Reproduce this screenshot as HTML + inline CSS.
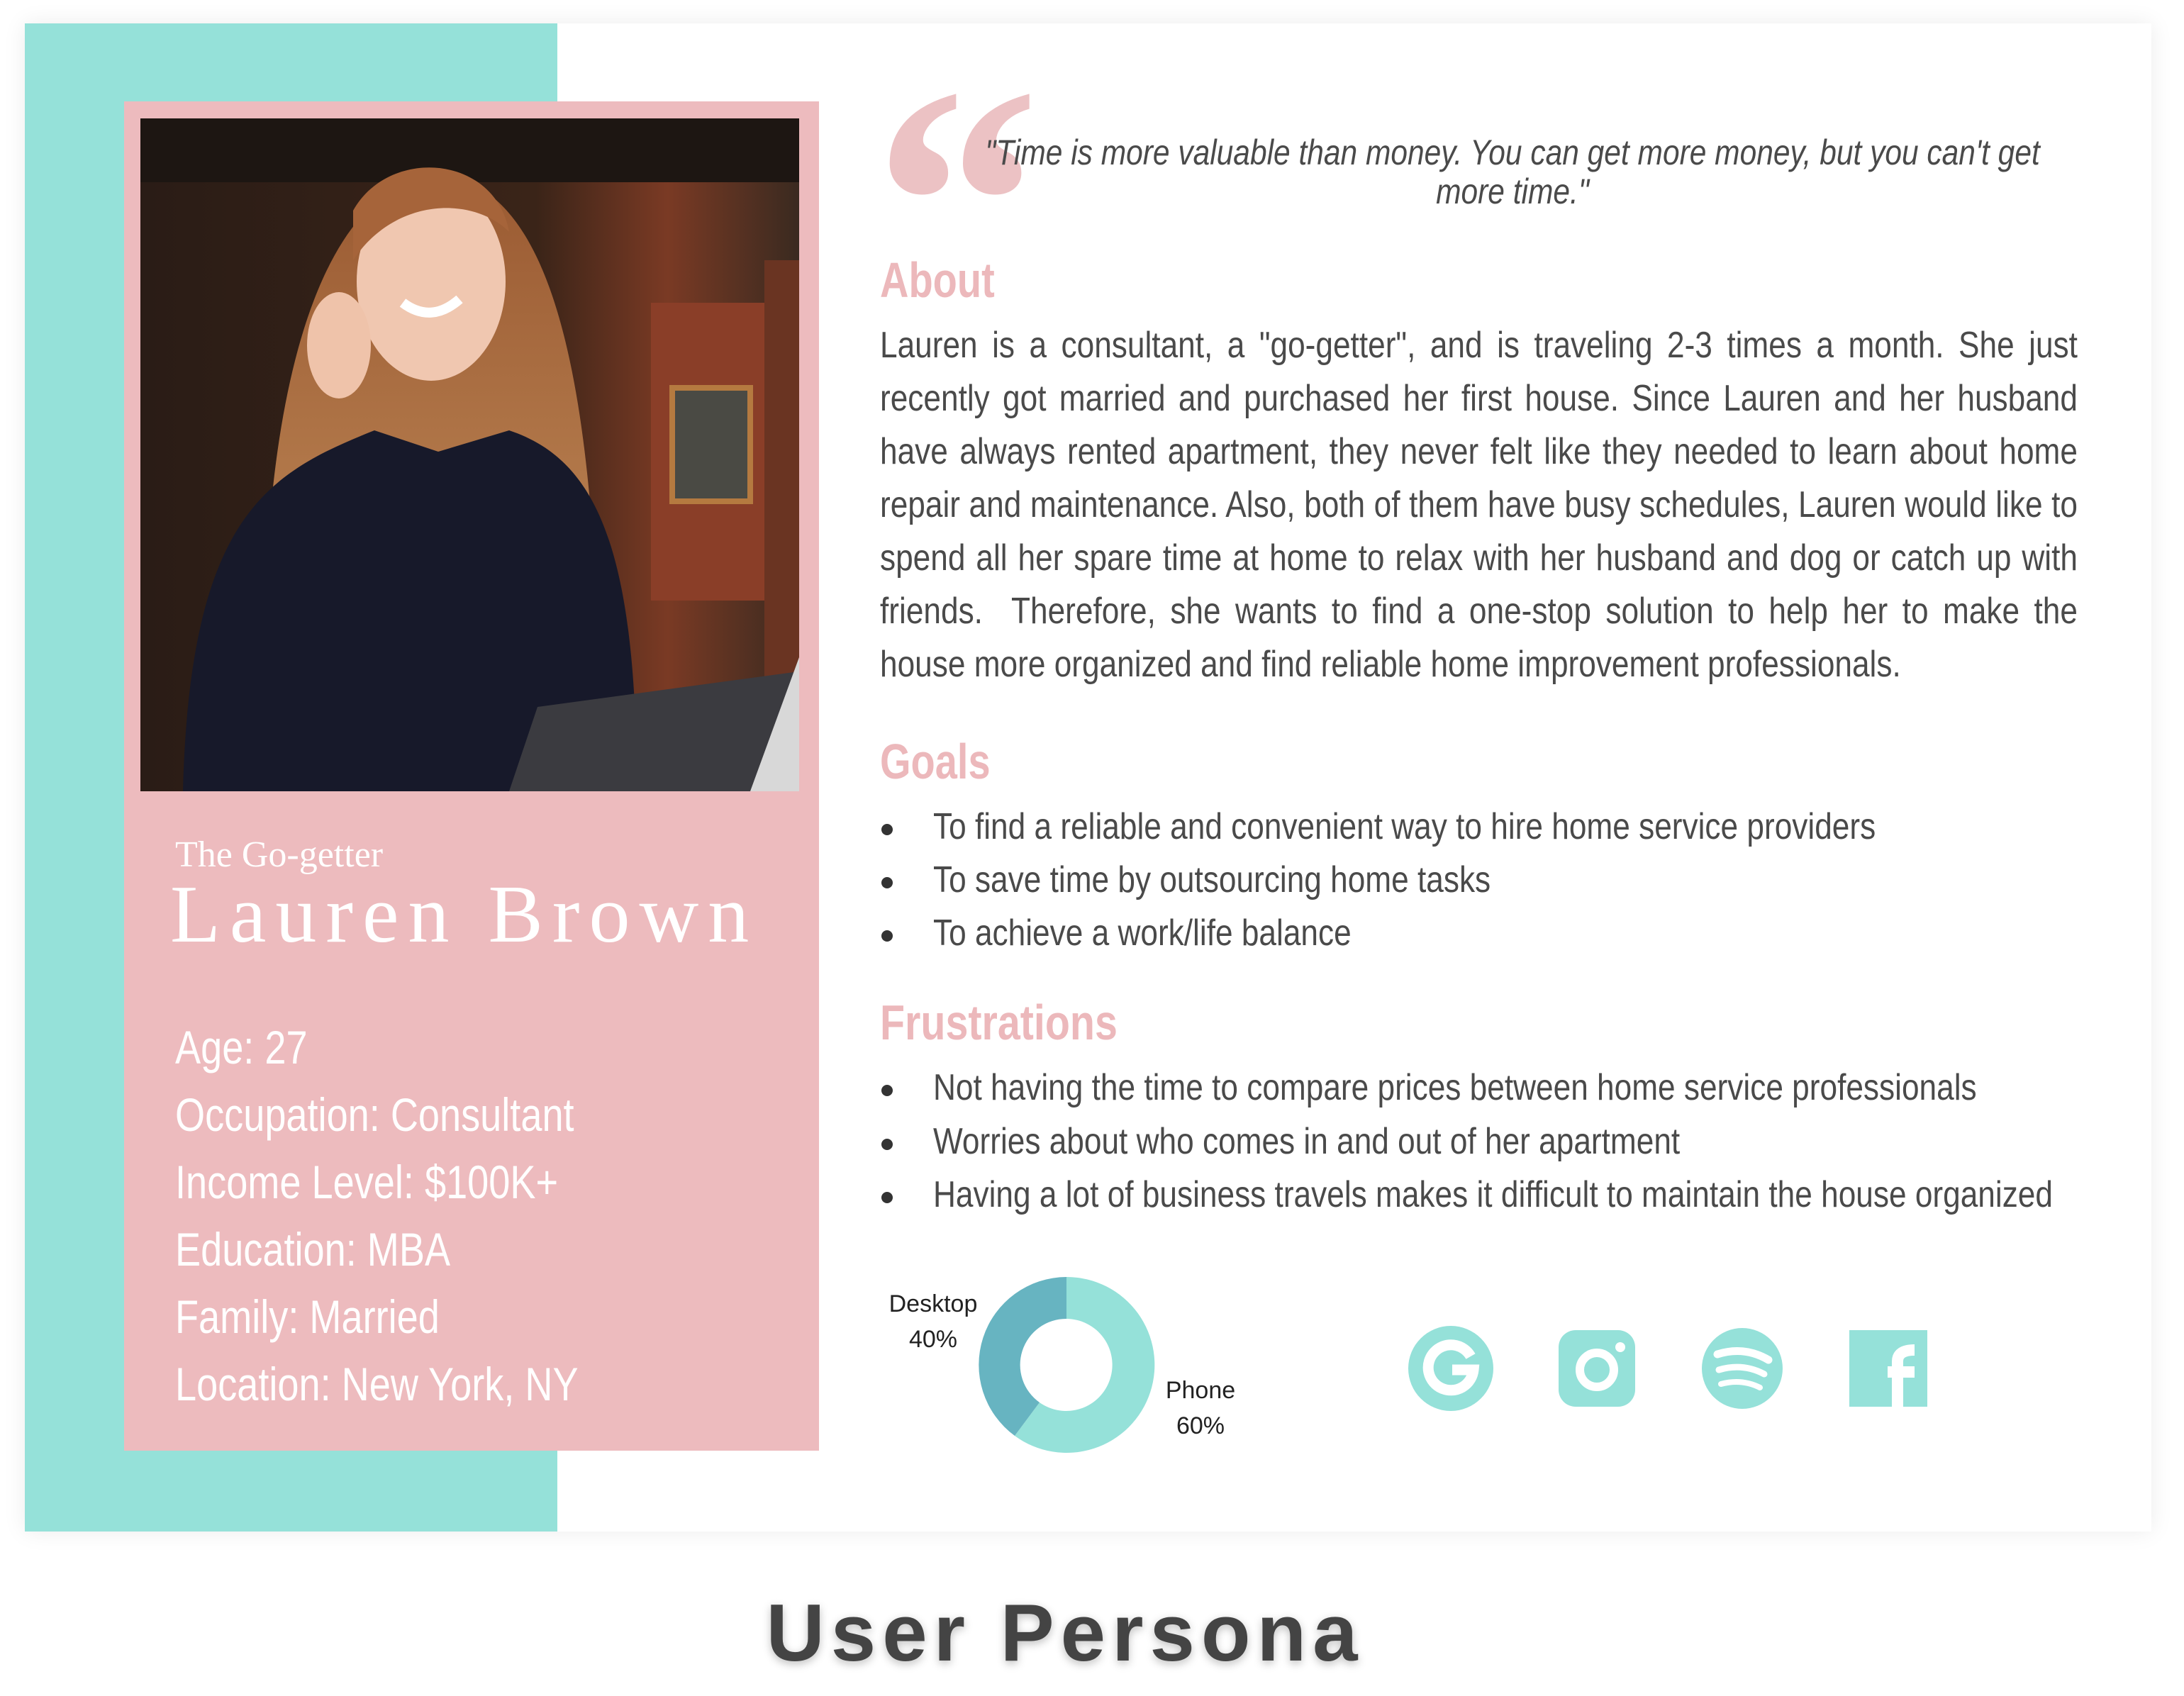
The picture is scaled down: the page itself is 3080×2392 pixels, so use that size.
<!DOCTYPE html>
<html><head><meta charset="utf-8">
<style>
*{margin:0;padding:0;box-sizing:border-box}
html,body{width:3080px;height:2392px;background:#fff;overflow:hidden;font-family:"Liberation Sans",sans-serif}
.abs{position:absolute}
.card{left:35px;top:33px;width:2999px;height:2127px;background:#fff;box-shadow:0 0 30px rgba(0,0,0,0.08)}
.teal{left:35px;top:33px;width:751px;height:2127px;background:#95e1d9}
.pink{left:175px;top:143px;width:980px;height:1903px;background:#edbbbe}
.photo{left:198px;top:167px;width:929px;height:949px;overflow:hidden}
.c{transform-origin:0 0;transform:scaleX(0.85);white-space:nowrap}
.body{color:#4a4a4a;font-size:52px}
.line{width:1987px;text-align:justify;text-align-last:justify;height:75px;line-height:75px}
.h{color:#ecb8bb;font-weight:bold;font-size:70px;transform:scaleX(0.8)}
.det{color:#fff;font-size:66px;line-height:95px;transform:scaleX(0.82)}
.bul{position:absolute;width:16px;height:16px;border-radius:50%;background:#333}
</style></head><body>
<div class="abs card"></div>
<div class="abs teal"></div>
<div class="abs pink"></div>
<div class="abs photo">
<svg width="929" height="949" viewBox="0 0 929 949">
<defs>
<linearGradient id="bg" x1="0" y1="0" x2="1" y2="0"><stop offset="0" stop-color="#2a1c16"/><stop offset="0.6" stop-color="#3a2418"/><stop offset="0.8" stop-color="#7a3a24"/><stop offset="1" stop-color="#3a2a20"/></linearGradient>
<linearGradient id="hair" x1="0" y1="0" x2="0" y2="1"><stop offset="0" stop-color="#9a5a32"/><stop offset="1" stop-color="#c08a58"/></linearGradient>
</defs>
<rect width="929" height="949" fill="url(#bg)"/>
<rect x="0" y="0" width="929" height="90" fill="#1d1612"/>
<rect x="720" y="260" width="170" height="420" fill="#8a3e28"/>
<rect x="750" y="380" width="110" height="160" fill="#4a4a44" stroke="#b57a40" stroke-width="8"/>
<rect x="880" y="200" width="49" height="600" fill="#6a3422"/>
<path d="M180 600 C200 300 280 90 420 80 C560 90 620 300 640 620 L560 780 L200 780 Z" fill="url(#hair)"/>
<ellipse cx="410" cy="230" rx="105" ry="140" fill="#f0c7b0"/>
<path d="M300 130 C350 40 500 50 520 160 C470 110 360 110 300 200 Z" fill="#a6643a"/>
<path d="M370 260 Q410 290 450 255" stroke="#fff" stroke-width="14" fill="none"/>
<path d="M60 949 C70 560 180 500 330 440 L420 470 L520 440 C640 480 700 600 700 949 Z" fill="#17192a"/>
<path d="M560 830 L929 780 L929 949 L520 949 Z" fill="#3b3b40"/>
<path d="M860 949 L929 760 L929 949 Z" fill="#d8d8d8"/>
<ellipse cx="280" cy="320" rx="45" ry="75" fill="#efc3aa"/>
</svg>
</div>

<div class="abs" style="left:247px;top:1176px;color:#fff;font-family:'Liberation Serif',serif;font-size:52px">The Go-getter</div>
<div class="abs" style="left:240px;top:1225px;color:#fff;font-family:'Liberation Serif',serif;font-size:116px;letter-spacing:13px;line-height:130px">Lauren Brown</div>

<div class="abs c det" style="left:247px;top:1430px">
<div>Age: 27</div>
<div>Occupation: Consultant</div>
<div>Income Level: $100K+</div>
<div>Education: MBA</div>
<div>Family: Married</div>
<div>Location: New York, NY</div>
</div>

<div class="abs" style="left:1232px;top:52px;color:#ecc2c4;font-family:'Liberation Serif',serif;font-size:470px;line-height:470px;font-weight:bold">&ldquo;</div>
<div class="abs c" style="left:1300px;top:188px;color:#4a4a4a;font-style:italic;font-size:50px;line-height:55px;width:1960px;text-align:center">"Time is more valuable than money. You can get more money, but you can't get<br>more time."</div>

<div class="abs c h" style="left:1241px;top:355px">About</div>
<div class="abs c body" style="left:1241px;top:450px">
<div class="line">Lauren is a consultant, a "go-getter", and is traveling 2-3 times a month. She just</div>
<div class="line">recently got married and purchased her first house. Since Lauren and her husband</div>
<div class="line">have always rented apartment, they never felt like they needed to learn about home</div>
<div class="line">repair and maintenance. Also, both of them have busy schedules, Lauren would like to</div>
<div class="line">spend all her spare time at home to relax with her husband and dog or catch up with</div>
<div class="line">friends.&nbsp; Therefore, she wants to find a one-stop solution to help her to make the</div>
<div class="line" style="text-align-last:left">house more organized and find reliable home improvement professionals.</div>
</div>

<div class="abs c h" style="left:1241px;top:1034px">Goals</div>
<div class="bul" style="left:1243px;top:1162px"></div>
<div class="bul" style="left:1243px;top:1237px"></div>
<div class="bul" style="left:1243px;top:1312px"></div>
<div class="abs c body" style="left:1316px;top:1129px;line-height:75px">
<div>To find a reliable and convenient way to hire home service providers</div>
<div>To save time by outsourcing home tasks</div>
<div>To achieve a work/life balance</div>
</div>

<div class="abs c h" style="left:1241px;top:1402px;transform:scaleX(0.82)">Frustrations</div>
<div class="bul" style="left:1243px;top:1530px"></div>
<div class="bul" style="left:1243px;top:1606px"></div>
<div class="bul" style="left:1243px;top:1681px"></div>
<div class="abs c body" style="left:1316px;top:1497px;line-height:75.5px">
<div>Not having the time to compare prices between home service professionals</div>
<div>Worries about who comes in and out of her apartment</div>
<div>Having a lot of business travels makes it difficult to maintain the house organized</div>
</div>

<svg class="abs" style="left:1250px;top:1780px" width="520" height="300" viewBox="1250 1780 520 300">
<path d="M1504 1801 A124 124 0 1 1 1431 2025 L1466 1978 A65 65 0 1 0 1504 1860 Z" fill="#95e1d9"/>
<path d="M1504 1801 L1504 1860 A65 65 0 0 0 1466 1978 L1431 2025 A124 124 0 0 1 1504 1801 Z" fill="#67b4c1"/>
<g font-family="Liberation Sans" font-size="34" fill="#222" text-anchor="middle">
<text x="1316" y="1850">Desktop</text><text x="1316" y="1900">40%</text>
<text x="1693" y="1972">Phone</text><text x="1693" y="2022">60%</text>
</g>
</svg>

<svg class="abs" style="left:1980px;top:1860px" width="760" height="140" viewBox="1980 1860 760 140">
<circle cx="2046" cy="1930" r="60" fill="#95e1d9"/>
<path d="M2074 1913 A32 32 0 1 0 2078 1932 L2048 1932" stroke="#fff" stroke-width="15" fill="none"/>
<rect x="2198" y="1876" width="108" height="108" rx="24" fill="#95e1d9"/>
<circle cx="2252" cy="1932" r="24" stroke="#fff" stroke-width="12" fill="none"/>
<circle cx="2285" cy="1900" r="7" fill="#fff"/>
<circle cx="2457" cy="1930" r="57" fill="#95e1d9"/>
<g stroke="#fff" stroke-linecap="round" fill="none"><path d="M2422 1910 Q2460 1898 2494 1918" stroke-width="11"/><path d="M2424 1932 Q2458 1922 2488 1938" stroke-width="9"/><path d="M2427 1952 Q2456 1944 2482 1957" stroke-width="8"/></g>
<rect x="2608" y="1876" width="110" height="108" fill="#95e1d9"/>
<path d="M2676 1984 L2676 1935 L2700 1935 M2662 1935 L2676 1935 L2676 1920 Q2676 1904 2700 1904" stroke="#fff" stroke-width="16" fill="none"/>
</svg>

<div class="abs" style="left:0;top:2238px;width:3004px;text-align:center;font-size:114px;font-weight:bold;letter-spacing:9px;color:#444;text-shadow:0 4px 12px rgba(0,0,0,0.25)">User Persona</div>
</body></html>
